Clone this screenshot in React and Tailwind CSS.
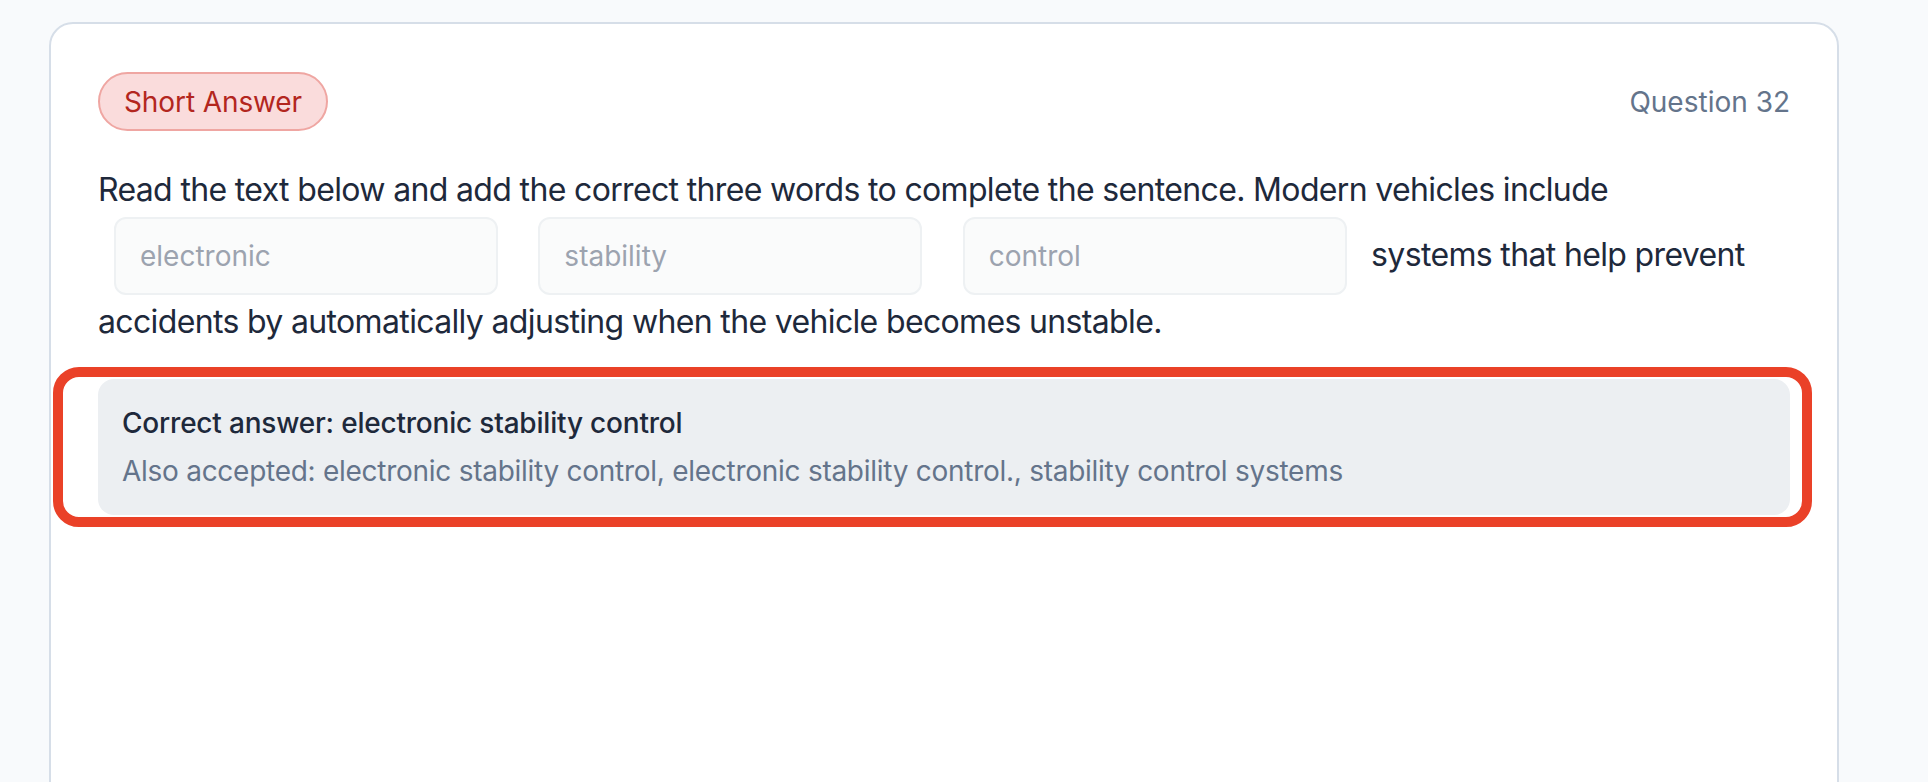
import React from "react";

function Blank({ placeholder }) {
  return (
    <input
      type="text"
      placeholder={placeholder}
      className="mx-[16px] my-[3px] inline-block h-[78px] w-[384px] rounded-[12px] border-2 border-[#eef1f3] bg-[#fafbfb] px-[24px] text-[28px] tracking-normal text-slate-800 placeholder:text-[#9ca3af] outline-none align-baseline"
      style={{ fontFamily: "Inter, 'Noto Sans', sans-serif" }}
    />
  );
}

export default function App() {
  return (
    <div
      className="min-h-[782px] w-full overflow-hidden bg-[#f8fafc] pt-[22px]"
      style={{ fontFamily: "Inter, 'Noto Sans', sans-serif" }}
    >
      <div className="ml-[49px] min-h-[900px] w-[1790px] rounded-[24px] border-2 border-[#d6dee8] bg-white px-[47px] pt-[48px]">
        <div className="mb-[35px] flex items-center justify-between">
          <span className="flex h-[59px] items-center rounded-full border-2 border-[#efa6a2] bg-[#fadcdc] px-[24px] text-[28px] leading-[40px] tracking-[-0.1px] text-[#b3261e]">
            Short Answer
          </span>
          <span className="text-[28px] leading-[40px] text-[#64748b]">Question 32</span>
        </div>

        <p className="text-[32px] leading-[48px] tracking-[-0.65px] text-[#1e293b]">
          Read the text below and add the correct three words to complete the sentence. Modern vehicles include{" "}
          <Blank placeholder="electronic" /> <Blank placeholder="stability" />{" "}
          <Blank placeholder="control" /> systems that help prevent accidents by automatically adjusting when the
          vehicle becomes unstable.
        </p>

        <div className="relative mt-[33px]">
          <div className="rounded-[16px] bg-[#eceff2] p-[24px]">
            <div className="text-[28px] font-medium leading-[40px] tracking-[-0.2px] text-[#1e293b]">
              Correct answer: electronic stability control
            </div>
            <div className="mt-[8px] text-[28px] leading-[40px] tracking-[-0.27px] text-[#64748b]">
              Also accepted: electronic stability control, electronic stability control., stability control systems
            </div>
          </div>
          <div className="pointer-events-none absolute -bottom-[12px] -left-[45px] -right-[22px] -top-[12px] rounded-[26px] border-[10px] border-[#ea4128]" />
        </div>
      </div>
    </div>
  );
}
